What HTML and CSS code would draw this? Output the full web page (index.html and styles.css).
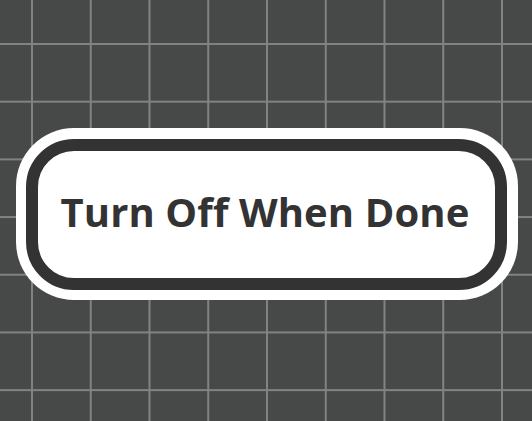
FILE: index.html
```html
<!DOCTYPE html>
<html>
<head>
<meta charset="utf-8">
<link rel="stylesheet" href="styles.css">
</head>
<body>
<div class="stage">
  <div class="badge-outer">
    <div class="badge-inner">
      <span class="label">Turn Off When Done</span>
    </div>
  </div>
</div>
</body>
</html>
```

FILE: styles.css
```css
html, body {
  margin: 0;
  padding: 0;
}
body {
  width: 532px;
  height: 421px;
  overflow: hidden;
  background-color: #474948;
  background-image:
    linear-gradient(to right, #818382 0, #818382 2px, transparent 2px),
    linear-gradient(to bottom, #818382 0, #818382 2px, transparent 2px);
  background-size: 58.75px 100%, 100% 57.7px;
  background-position: 31px 0, 0 43px;
  font-family: "Open Sans", "DejaVu Sans", sans-serif;
}
.stage {
  display: flex;
  justify-content: center;
  padding-top: 128px;
  padding-left: 1px;
}
.badge-outer {
  width: 502px;
  height: 172px;
  box-sizing: border-box;
  background: #ffffff;
  border-radius: 58px;
  padding: 11px 11px 10px 10px;
}
.badge-inner {
  height: 100%;
  box-sizing: border-box;
  border: 12px solid #333333;
  border-radius: 48px;
  background: #ffffff;
  display: flex;
  align-items: center;
  justify-content: center;
}
.label {
  font-size: 40px;
  font-weight: 700;
  color: #333333;
  letter-spacing: 0.1px;
  line-height: 1;
  padding-bottom: 6px;
  padding-right: 2px;
}
```
